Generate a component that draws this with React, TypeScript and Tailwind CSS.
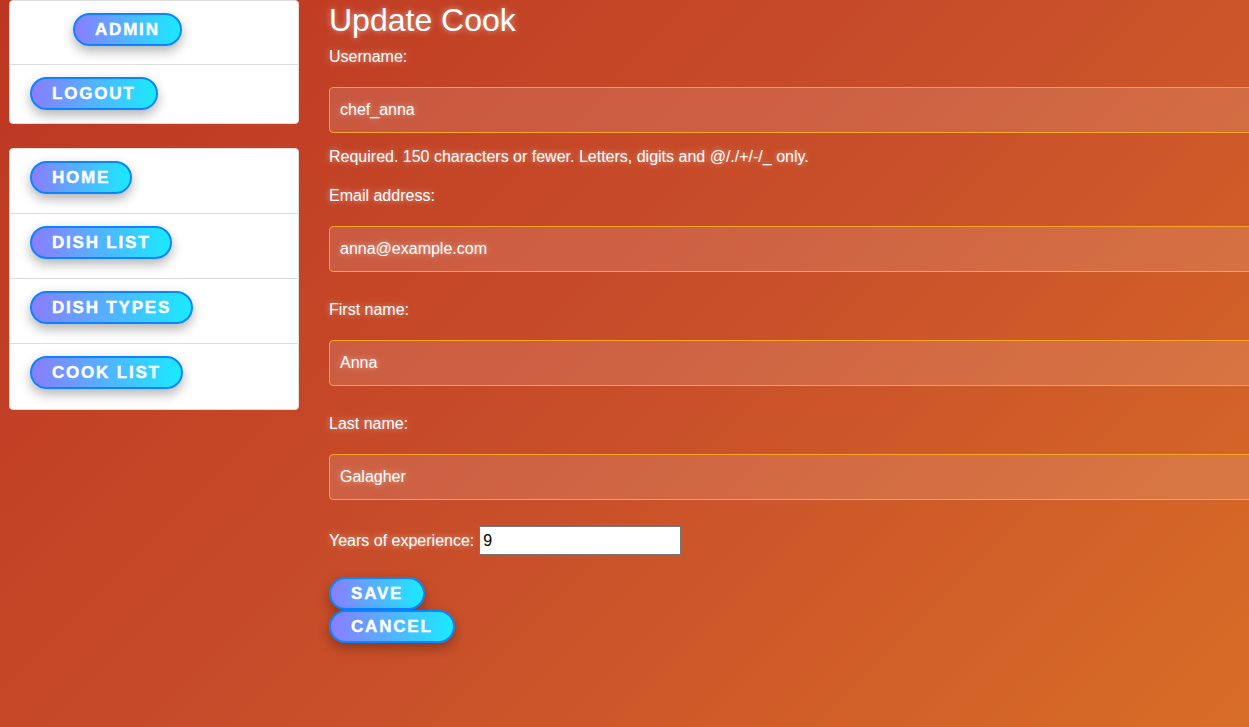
import React from "react";

function Btn({ label, className = "" }: { label: string; className?: string }) {
  return (
    <button
      type="button"
      className={
        "inline-flex h-[33px] items-center rounded-full border-2 border-[#0a85ff] bg-[linear-gradient(90deg,#8a7dff,#1aeaff)] px-[20px] text-[17px] font-bold uppercase leading-none tracking-[1.8px] text-white shadow-[0_5px_12px_rgba(0,0,0,0.3)] [-webkit-text-stroke:0.4px_white] " +
        className
      }
      style={{ fontFamily: '"Liberation Sans", Arial, sans-serif' }}
    >
      {label}
    </button>
  );
}

const glow = "[text-shadow:0_0_6px_rgba(255,255,255,0.55)]";

function Field({ label, value, top }: { label: string; value: string; top: string }) {
  return (
    <div className={"flex flex-col " + top}>
      <div className={"h-[18px] leading-[18px] text-white " + glow}>{label}</div>
      <div
        className={
          "mt-[21px] flex h-[46px] w-[1000px] items-center rounded-[4px] border border-[#f7a628] bg-[rgba(255,255,255,0.12)] pl-[10px] text-white " +
          glow
        }
      >
        {value}
      </div>
    </div>
  );
}

export default function App() {
  return (
    <div
      className="flex h-[727px] w-full overflow-hidden bg-[linear-gradient(135deg,#bd3622_0%,#c9502a_55%,#d86d26_100%)] text-[16px]"
      style={{ fontFamily: '"Liberation Sans", Arial, sans-serif' }}
    >
      <aside className="ml-[9px] flex w-[290px] shrink-0 flex-col">
        <div className="flex flex-col rounded-[4px] border border-[#dddddd] bg-white">
          <div className="flex h-[64px] items-start border-b border-[#dddddd] pl-[63px] pt-[12px]">
            <Btn label="Admin" />
          </div>
          <div className="flex h-[58px] items-start pl-[20px] pt-[12px]">
            <Btn label="Logout" />
          </div>
        </div>
        <div className="mt-[24px] flex flex-col rounded-[4px] border border-[#dddddd] bg-white">
          {["Home", "Dish list", "Dish types", "Cook list"].map((l, i, arr) => (
            <div
              key={l}
              className={
                "flex h-[65px] items-start pl-[20px] pt-[12px] " +
                (i < arr.length - 1 ? "border-b border-[#dddddd]" : "")
              }
            >
              <Btn label={l} />
            </div>
          ))}
        </div>
      </aside>

      <main className="ml-[30px] flex min-w-0 flex-1 flex-col">
        <h1 className={"h-[40px] text-[32px] leading-[40px] text-white " + glow}>Update Cook</h1>
        <Field label="Username:" value="chef_anna" top="mt-[8px]" />
        <div className={"mt-[15px] h-[18px] leading-[18px] text-white " + glow}>
          Required. 150 characters or fewer. Letters, digits and @/./+/-/_ only.
        </div>
        <Field label="Email address:" value="anna@example.com" top="mt-[21px]" />
        <Field label="First name:" value="Anna" top="mt-[29px]" />
        <Field label="Last name:" value="Galagher" top="mt-[29px]" />
        <div className="mt-[26px] flex items-center">
          <span className={"text-white " + glow}>Years of experience:</span>
          <div className="ml-[5px] flex h-[29px] w-[202px] items-center border border-[#767676] bg-white pl-[3px] text-black">
            9
          </div>
        </div>
        <div className="mt-[22px] flex flex-col items-start">
          <Btn label="Save" />
          <Btn label="Cancel" />
        </div>
      </main>
    </div>
  );
}
